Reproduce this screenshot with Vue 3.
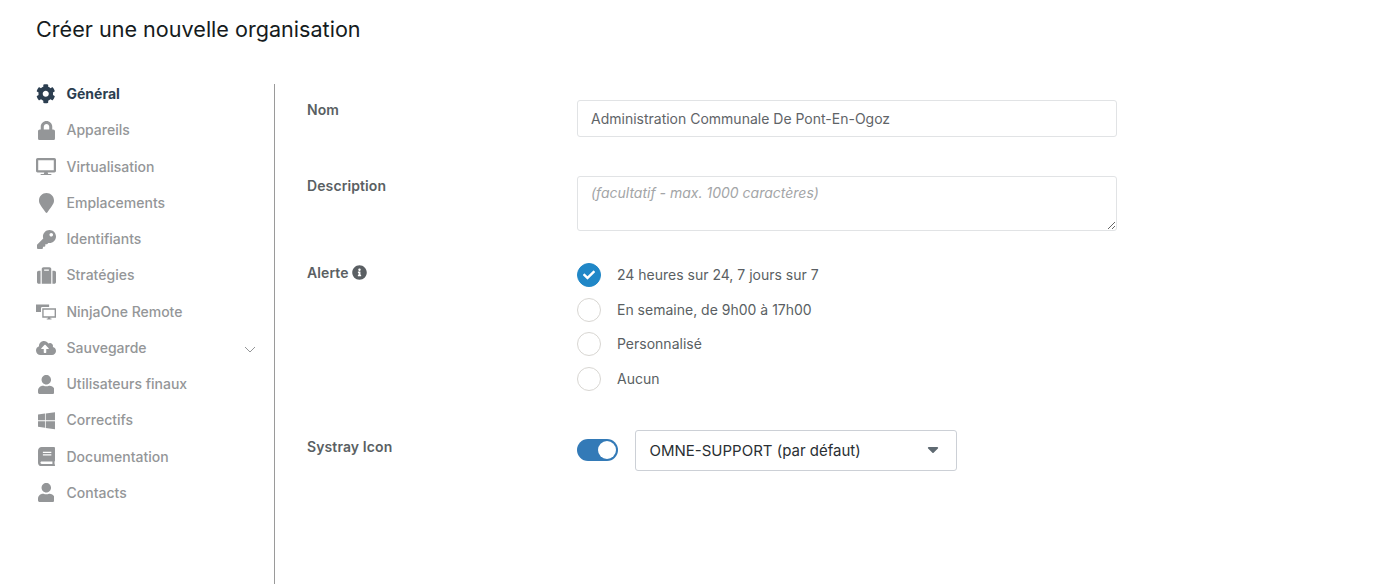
<script setup>
const P = {
  cog: ['0 0 512 512', 'M487.4 315.7l-42.6-24.6c4.3-23.2 4.3-47 0-70.2l42.6-24.6c4.9-2.8 7.1-8.6 5.5-14-11.1-35.6-30-67.8-54.7-94.6-3.8-4.1-10-5.1-14.8-2.3L380.8 110c-17.9-15.4-38.5-27.3-60.8-35.1V25.8c0-5.6-3.9-10.5-9.4-11.7-36.7-8.2-74.3-7.8-109.2 0-5.5 1.2-9.4 6.1-9.4 11.7V75c-22.2 7.9-42.8 19.8-60.8 35.1L88.7 85.5c-4.9-2.8-11-1.9-14.8 2.3-24.7 26.7-43.6 58.9-54.7 94.6-1.7 5.4.6 11.2 5.5 14L67.3 221c-4.3 23.2-4.3 47 0 70.2l-42.6 24.6c-4.9 2.8-7.1 8.6-5.5 14 11.1 35.6 30 67.8 54.7 94.6 3.8 4.1 10 5.1 14.8 2.3l42.6-24.6c17.9 15.4 38.5 27.3 60.8 35.1v49.2c0 5.6 3.9 10.5 9.4 11.7 36.7 8.2 74.3 7.8 109.2 0 5.5-1.2 9.4-6.1 9.4-11.7v-49.2c22.2-7.9 42.8-19.8 60.8-35.1l42.6 24.6c4.9 2.8 11 1.9 14.8-2.3 24.7-26.7 43.6-58.9 54.7-94.6 1.5-5.5-.7-11.3-5.6-14.1zM256 336c-44.1 0-80-35.9-80-80s35.9-80 80-80 80 35.9 80 80-35.9 80-80 80z'],
  lock: ['0 0 448 512', 'M400 224h-24v-72C376 68.2 307.8 0 224 0S72 68.2 72 152v72H48c-26.5 0-48 21.5-48 48v192c0 26.5 21.5 48 48 48h352c26.5 0 48-21.5 48-48V272c0-26.5-21.5-48-48-48zm-104 0H152v-72c0-39.7 32.3-72 72-72s72 32.3 72 72v72z'],
  desktop: ['0 0 576 512', 'M528 0H48C21.5 0 0 21.5 0 48v320c0 26.5 21.5 48 48 48h192l-16 48h-72c-13.3 0-24 10.7-24 24s10.7 24 24 24h272c13.3 0 24-10.7 24-24s-10.7-24-24-24h-72l-16-48h192c26.5 0 48-21.5 48-48V48c0-26.5-21.5-48-48-48zm-16 352H64V64h448v288z'],
  marker: ['0 0 384 512', 'M172.268 501.67C26.97 291.031 0 269.413 0 192 0 85.961 85.961 0 192 0s192 85.961 192 192c0 77.413-26.97 99.031-172.268 309.67-9.535 13.774-29.93 13.773-39.464 0z'],
  key: ['0 0 512 512', 'M512 176.001C512 273.203 433.202 352 336 352c-11.22 0-22.19-1.062-32.827-3.069l-24.012 27.014A23.999 23.999 0 0 1 261.223 384H224v40c0 13.255-10.745 24-24 24h-40v40c0 13.255-10.745 24-24 24H24c-13.255 0-24-10.745-24-24v-78.059c0-6.365 2.529-12.47 7.029-16.971l161.802-161.802C163.108 213.814 160 195.271 160 176 160 78.798 238.797.001 335.999 0 433.488-.001 512 78.511 512 176.001zM336 128c0 26.51 21.49 48 48 48s48-21.49 48-48-21.49-48-48-48-48 21.49-48 48z'],
  suitcase: ['0 0 512 512', 'M128 480h256V80c0-26.5-21.5-48-48-48H176c-26.5 0-48 21.5-48 48v400zm64-384h128v32H192V96zm320 80v256c0 26.5-21.5 48-48 48h-48V128h48c26.5 0 48 21.5 48 48zM96 480H48c-26.5 0-48-21.5-48-48V176c0-26.5 21.5-48 48-48h48v352z'],
  remote: ['0 0 640 512', 'M0 16h420v80H200a40 40 0 0 0-40 40v120H0zM200 136h440v300H456v28h40v32H344v-32h40v-28H200zm44 44v212h352V180z'],
  cloud: ['0 0 640 512', 'M537.6 226.6c4.1-10.7 6.4-22.4 6.4-34.6 0-53-43-96-96-96-19.7 0-38.1 6-53.3 16.2C367 64.2 315.3 32 256 32c-88.4 0-160 71.6-160 160 0 2.7.1 5.4.2 8.1C40.2 219.8 0 273.2 0 336c0 79.5 64.5 144 144 144h368c70.7 0 128-57.3 128-128 0-61.9-44-113.6-102.4-125.4zM393.4 288H328v112c0 8.8-7.2 16-16 16h-48c-8.8 0-16-7.2-16-16V288h-65.4c-14.3 0-21.4-17.2-11.3-27.3l105.4-105.4c6.2-6.2 16.4-6.2 22.6 0l105.4 105.4c10.1 10.1 2.9 27.3-11.3 27.3z'],
  user: ['0 0 448 512', 'M224 256c70.7 0 128-57.3 128-128S294.7 0 224 0 96 57.3 96 128s57.3 128 128 128zm89.6 32h-16.7c-22.2 10.2-46.9 16-72.9 16s-50.6-5.8-72.9-16h-16.7C60.2 288 0 348.2 0 422.4V464c0 26.5 21.5 48 48 48h352c26.5 0 48-21.5 48-48v-41.6c0-74.2-60.2-134.4-134.4-134.4z'],
  windows: ['0 0 448 512', 'M0 93.7l183.6-25.3v177.4H0V93.7zm0 324.6l183.6 25.3V268.4H0v149.9zm203.8 28L448 480V268.4H203.8v177.9zm0-380.6v180.1H448V32L203.8 65.7z'],
  book: ['0 0 448 512', 'M448 360V24c0-13.3-10.7-24-24-24H96C43 0 0 43 0 96v320c0 53 43 96 96 96h328c13.3 0 24-10.7 24-24v-16c0-7.5-3.5-14.3-8.9-18.7-4.2-15.4-4.2-59.3 0-74.7 5.4-4.3 8.9-11.1 8.9-18.6zM128 134c0-3.3 2.7-6 6-6h212c3.3 0 6 2.7 6 6v20c0 3.3-2.7 6-6 6H134c-3.3 0-6-2.7-6-6v-20zm0 64c0-3.3 2.7-6 6-6h212c3.3 0 6 2.7 6 6v20c0 3.3-2.7 6-6 6H134c-3.3 0-6-2.7-6-6v-20zm253.4 250H96c-17.7 0-32-14.3-32-32 0-17.6 14.4-32 32-32h285.4c-1.9 17.1-1.9 46.9 0 64z'],
  info: ['0 0 512 512', 'M256 8C119.043 8 8 119.083 8 256c0 136.997 111.043 248 248 248s248-111.003 248-248C504 119.083 392.957 8 256 8zm0 110c23.196 0 42 18.804 42 42s-18.804 42-42 42-42-18.804-42-42 18.804-42 42-42zm56 254c0 6.627-5.373 12-12 12h-88c-6.627 0-12-5.373-12-12v-24c0-6.627 5.373-12 12-12h12v-64h-12c-6.627 0-12-5.373-12-12v-24c0-6.627 5.373-12 12-12h64c6.627 0 12 5.373 12 12v100h12c6.627 0 12 5.373 12 12v24z'],
  check: ['0 0 512 512', 'M173.898 439.404l-166.4-166.4c-9.997-9.997-9.997-26.206 0-36.204l36.203-36.204c9.997-9.998 26.207-9.998 36.204 0L192 312.69 432.095 72.596c9.997-9.997 26.207-9.997 36.204 0l36.203 36.204c9.997 9.997 9.997 26.206 0 36.204l-294.4 294.401c-9.998 9.997-26.207 9.997-36.204-.001z']
}
const menu = [
  { label: 'Général', icon: 'cog', w: 19.5, h: 19.5, active: true },
  { label: 'Appareils', icon: 'lock', w: 17, h: 19.4 },
  { label: 'Virtualisation', icon: 'desktop', w: 20, h: 17.8 },
  { label: 'Emplacements', icon: 'marker', w: 15, h: 20 },
  { label: 'Identifiants', icon: 'key', w: 19, h: 19 },
  { label: 'Stratégies', icon: 'suitcase', w: 19, h: 19 },
  { label: 'NinjaOne Remote', icon: 'remote', w: 20, h: 16 },
  { label: 'Sauvegarde', icon: 'cloud', w: 20, h: 16, chevron: true },
  { label: 'Utilisateurs finaux', icon: 'user', w: 16.6, h: 19 },
  { label: 'Correctifs', icon: 'windows', w: 17, h: 19.4 },
  { label: 'Documentation', icon: 'book', w: 17, h: 19.4 },
  { label: 'Contacts', icon: 'user', w: 16.6, h: 19 }
]
const alerts = [
  { label: '24 heures sur 24, 7 jours sur 7', on: true },
  { label: 'En semaine, de 9h00 à 17h00' },
  { label: 'Personnalisé' },
  { label: 'Aucun' }
]
</script>

<template>
  <div class="page">
    <h1 class="title">Créer une nouvelle organisation</h1>
    <div class="body">
      <nav class="side">
        <div v-for="m in menu" :key="m.label" class="item" :class="{ active: m.active }">
          <span class="ico">
            <svg :viewBox="P[m.icon][0]" :width="m.w" :height="m.h" fill="currentColor"><path :d="P[m.icon][1]" /></svg>
          </span>
          <span class="lbl">{{ m.label }}</span>
          <svg v-if="m.chevron" class="chev" viewBox="0 0 12 7" width="12" height="7" fill="none" stroke="currentColor" stroke-width="1"><path d="M1 1l5 5 5-5" /></svg>
        </div>
      </nav>
      <main class="form">
        <div class="row r-name">
          <label class="lab">Nom</label>
          <input class="field" type="text" value="Administration Communale De Pont-En-Ogoz" />
        </div>
        <div class="row r-desc">
          <label class="lab">Description</label>
          <textarea class="field area" placeholder="(facultatif - max. 1000 caractères)"></textarea>
        </div>
        <div class="row r-alert">
          <label class="lab lab-inf"><span>Alerte</span>
            <svg class="inf" viewBox="0 0 512 512" width="15" height="15" fill="currentColor"><path :d="P.info[1]" /></svg>
          </label>
          <div class="radios">
            <div v-for="a in alerts" :key="a.label" class="radio">
              <span class="dot" :class="{ on: a.on }">
                <svg v-if="a.on" viewBox="0 0 512 512" width="12" height="12" fill="#fff"><path :d="P.check[1]" /></svg>
              </span>
              <span>{{ a.label }}</span>
            </div>
          </div>
        </div>
        <div class="row r-sys">
          <label class="lab">Systray Icon</label>
          <div class="sys">
            <span class="toggle"><span class="knob"></span></span>
            <div class="select">
              <span>OMNE-SUPPORT (par défaut)</span>
              <svg viewBox="0 0 12 7" width="12" height="6" fill="#5f6a72"><path d="M1 0h10a1 1 0 0 1 .7 1.7l-5 5a1 1 0 0 1-1.4 0l-5-5A1 1 0 0 1 1 0z" /></svg>
            </div>
          </div>
        </div>
      </main>
    </div>
  </div>
</template>

<style>
html, body { margin: 0; background: #fff; }
</style>

<style scoped>
.page {
  height: 584px;
  overflow: hidden;
  display: flex;
  flex-direction: column;
  font-family: Inter, "Liberation Sans", sans-serif;
  background: #fff;
}
.title {
  margin: 0;
  padding: 15px 0 0 36px;
  height: 84px;
  box-sizing: border-box;
  font-size: 21.6px;
  line-height: 28px;
  font-weight: 400;
  color: #151b20;
}
.body { flex: 1; display: flex; min-height: 0; }
.side {
  width: 238px;
  margin-left: 36px;
  border-right: 1px solid #9a9a9a;
}
.item {
  display: flex;
  align-items: flex-start;
  height: 36.27px;
  font-size: 14px;
  line-height: 20px;
  font-weight: 500;
  color: #949698;
}
.item.active { color: #2c3e50; font-weight: 700; }
.ico { width: 20px; height: 20px; margin-right: 10.5px; display: flex; justify-content: center; align-items: center; }
.lbl { flex: 1; }
.chev { margin: 8px 18px 0 0; color: #949698; }
.form {
  flex: 1;
  padding: 16px 0 0 32px;
}
.row { display: flex; }
.lab {
  width: 270px;
  flex: none;
  font-size: 14px;
  line-height: 17px;
  letter-spacing: 0.1px;
  font-weight: 600;
  color: #5a5f63;
  display: block;
}
.lab-inf { display: flex; align-items: center; gap: 3px; height: 18px; }
.field {
  width: 540px;
  box-sizing: border-box;
  border: 1px solid #e1e3e5;
  border-radius: 3px;
  background: #fff;
  font-family: inherit;
  font-size: 14px;
  color: #5f6468;
  padding: 0 13px;
  outline: none;
  margin: 0;
  display: block;
}
.r-name { height: 37px; margin-bottom: 39px; }
.r-name .lab { padding-top: 1px; }
.r-name .field { height: 37px; }
.r-desc { height: 55px; margin-bottom: 32px; }
.r-desc .lab { padding-top: 1px; }
.area { height: 55px; padding-top: 7px; resize: vertical; }
.area::placeholder { color: #a3a5a7; font-style: italic; opacity: 1; }
.r-alert { height: 167px; }
.inf { color: #5a5f63; flex: none; }
.radios { display: flex; flex-direction: column; }
.radio {
  height: 34.6px;
  display: flex;
  align-items: flex-start;
  gap: 16px;
  font-size: 14px;
  color: #5a5f63;
  line-height: 24px;
}
.dot {
  width: 24px;
  height: 24px;
  box-sizing: border-box;
  border: 1px solid #d8d6d2;
  border-radius: 50%;
  display: flex;
  align-items: center;
  justify-content: center;
  background: #fff;
}
.dot.on { background: #2087c7; border-color: #2087c7; }
.r-sys .lab { padding-top: 8px; }
.sys { display: flex; align-items: center; gap: 17px; }
.toggle {
  width: 41px;
  height: 22px;
  border-radius: 11px;
  background: #337ab7;
  position: relative;
  display: block;
  margin-bottom: 1px;
}
.knob {
  position: absolute;
  right: 2px;
  top: 2px;
  width: 18px;
  height: 18px;
  border-radius: 50%;
  background: #fff;
}
.select {
  width: 322px;
  height: 41px;
  box-sizing: border-box;
  border: 1px solid #ccd0d6;
  border-radius: 3px;
  display: flex;
  align-items: center;
  justify-content: space-between;
  padding: 0 17px 1px 13.5px;
  font-size: 15px;
  color: #2a2f33;
}
</style>
